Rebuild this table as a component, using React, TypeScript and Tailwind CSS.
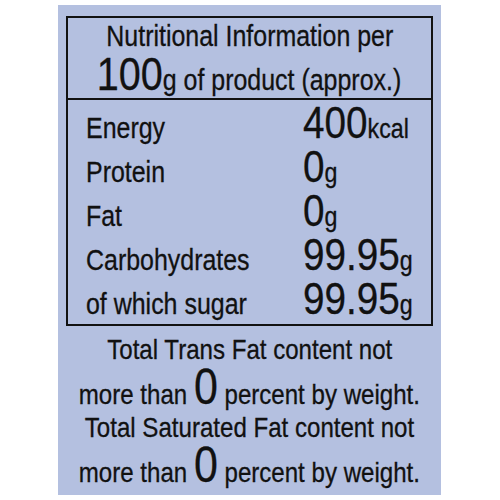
import React from 'react';

const rows = [
  { label: 'Energy', value: '400', unit: 'kcal' },
  { label: 'Protein', value: '0', unit: 'g' },
  { label: 'Fat', value: '0', unit: 'g' },
  { label: 'Carbohydrates', value: '99.95', unit: 'g' },
  { label: 'of which sugar', value: '99.95', unit: 'g' },
];

const font = { fontFamily: '"Liberation Sans", Arial, sans-serif' };

// condensed look: Liberation Sans squeezed horizontally
const Squeeze: React.FC<{ children: React.ReactNode; left?: boolean }> = ({ children, left }) => (
  <span
    className={`inline-flex items-baseline whitespace-nowrap shrink-0 scale-x-[0.86] ${left ? 'origin-left' : 'origin-center'}`}
  >
    {children}
  </span>
);

const ZeroLine: React.FC = () => (
  <div className="flex justify-center items-baseline h-[50px]">
    <Squeeze>
      <span className="text-[28px] leading-none">more than&nbsp;</span>
      <span className="text-[50px] leading-none">0</span>
      <span className="text-[28px] leading-none">&nbsp;percent by weight.</span>
    </Squeeze>
  </div>
);

const App: React.FC = () => {
  return (
    <div className="w-[500px] h-[500px] bg-white pl-[58px] pt-[5px]" style={font}>
      <div className="w-[383px] h-[490px] bg-[#b4c0e0] text-[#111] [-webkit-text-stroke:0.3px_#111] pt-[11px] pl-[8px] overflow-hidden">
        {/* table box */}
        <div className="w-[367px] h-[310px] border-2 border-[#111]">
          <div className="h-[82px] border-b-2 border-[#111]">
            <div className="flex justify-center h-[36px]">
              <Squeeze>
                <span className="text-[29px] leading-[36px]">Nutritional Information per</span>
              </Squeeze>
            </div>
            <div className="flex justify-center items-baseline">
              <Squeeze>
                <span className="text-[46px] leading-[40px]">100</span>
                <span className="text-[29px] leading-[40px]">g of product (approx.)</span>
              </Squeeze>
            </div>
          </div>
          <div className="pl-[18px]">
            {rows.map((row) => (
              <div key={row.label} className="flex items-baseline h-[44px]">
                <span className="w-[217px] shrink-0">
                  <Squeeze left>
                    <span className="text-[29px] leading-none">{row.label}</span>
                  </Squeeze>
                </span>
                <Squeeze left>
                  <span className="text-[45px] leading-none">{row.value}</span>
                  <span className="text-[27px] leading-none">{row.unit}</span>
                </Squeeze>
              </div>
            ))}
          </div>
        </div>

        {/* footnotes */}
        <div className="-ml-[8px]">
          <div className="mt-[10px] h-[26px] flex justify-center">
            <Squeeze>
              <span className="text-[28px] leading-[28px]">Total Trans Fat content not</span>
            </Squeeze>
          </div>
          <ZeroLine />
          <div className="mt-[2px] h-[26px] flex justify-center">
            <Squeeze>
              <span className="text-[28px] leading-[28px]">Total Saturated Fat content not</span>
            </Squeeze>
          </div>
          <ZeroLine />
        </div>
      </div>
    </div>
  );
};

export default App;
